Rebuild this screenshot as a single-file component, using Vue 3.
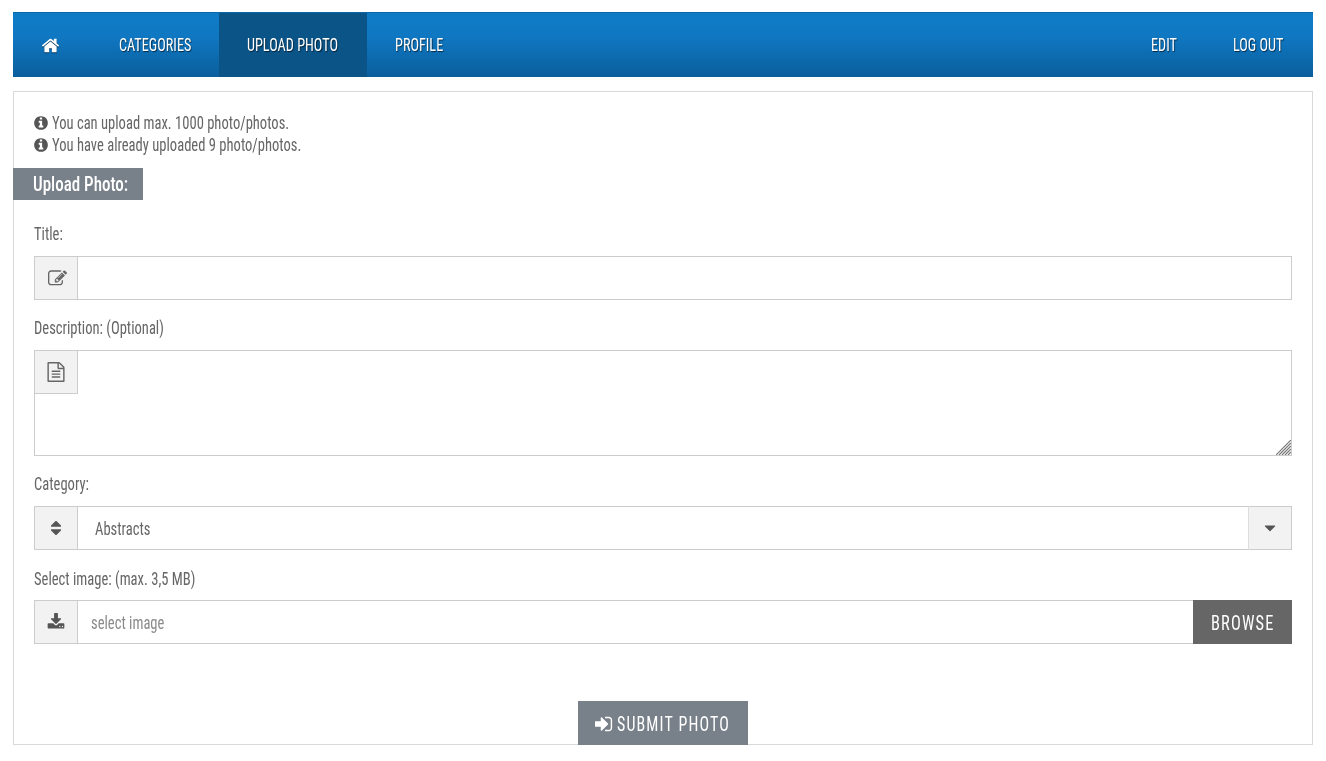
<script setup>
const notes = ['You can upload max. 1000 photo/photos.', 'You have already uploaded 9 photo/photos.']
const leftNav = [
  { label: 'CATEGORIES', width: 72, active: false },
  { label: 'UPLOAD PHOTO', width: 92, active: true },
  { label: 'PROFILE', width: 47, active: false },
]
const rightNav = [
  { label: 'EDIT', width: 26 },
  { label: 'LOG OUT', width: 52 },
]
const icons = {
  home: 'M1472 992v480q0 26-19 45t-45 19h-384v-384h-256v384h-384q-26 0-45-19t-19-45v-480q0-1 .5-3t.5-3l575-474 575 474q1 2 1 6zm223-69l-62 74q-8 9-21 11h-3q-13 0-21-7l-692-577-692 577q-12 8-24 7-13-2-21-11l-62-74q-8-10-7-23.500t11-21.500l719-599q32-26 76-26t76 26l244 204v-195q0-14 9-23t23-9h192q14 0 23 9t9 23v408l219 182q10 8 11 21.500t-7 23.500z',
  info: 'M1152 1376v-160q0-14-9-23t-23-9h-96v-512q0-14-9-23t-23-9h-320q-14 0-23 9t-9 23v160q0 14 9 23t23 9h96v320h-96q-14 0-23 9t-9 23v160q0 14 9 23t23 9h448q14 0 23-9t9-23zm-128-896v-160q0-14-9-23t-23-9h-192q-14 0-23 9t-9 23v160q0 14 9 23t23 9h192q14 0 23-9t9-23zm640 416q0 209-103 385.500t-279.500 279.500-385.500 103-385.500-103-279.500-279.500-103-385.500 103-385.500 279.500-279.500 385.500-103 385.500 103 279.500 279.500 103 385.500z',
  edit: 'M888 1184l116-116-152-152-116 116v56h96v96h56zm440-720q-16-16-33 1l-350 350q-17 17-1 33t33-1l350-350q17-17 1-33zm80 594v190q0 119-84.500 203.500t-203.500 84.500h-832q-119 0-203.500-84.500t-84.500-203.500v-832q0-119 84.500-203.500t203.500-84.500h832q63 0 117 25 15 7 18 23 3 17-9 29l-49 49q-14 14-32 8-23-6-45-6h-832q-66 0-113 47t-47 113v832q0 66 47 113t113 47h832q66 0 113-47t47-113v-126q0-13 9-22l64-64q15-15 35-7t20 29zm-96-738l288 288-672 672h-288v-288zm444 132l-92 92-288-288 92-92q28-28 68-28t68 28l152 152q28 28 28 68t-28 68z',
  file: 'M1596 380q28 28 48 76t20 88v1152q0 40-28 68t-68 28h-1344q-40 0-68-28t-28-68v-1600q0-40 28-68t68-28h896q40 0 88 20t76 48zm-444-244v376h376q-10-29-22-41l-313-313q-12-12-41-22zm384 1528v-1024h-416q-40 0-68-28t-28-68v-416h-768v1536h1280zm-1024-864q0-14 9-23t23-9h704q14 0 23 9t9 23v64q0 14-9 23t-23 9h-704q-14 0-23-9t-9-23v-64zm736 224q14 0 23 9t9 23v64q0 14-9 23t-23 9h-704q-14 0-23-9t-9-23v-64q0-14 9-23t23-9h704zm0 256q14 0 23 9t9 23v64q0 14-9 23t-23 9h-704q-14 0-23-9t-9-23v-64q0-14 9-23t23-9h704z',
  sort: 'M1408 1088q0 26-19 45l-448 448q-19 19-45 19t-45-19l-448-448q-19-19-19-45t19-45 45-19h896q26 0 45 19t19 45zm0-384q0 26-19 45t-45 19h-896q-26 0-45-19t-19-45 19-45l448-448q19-19 45-19t45 19l448 448q19 19 19 45z',
  caret: 'M1408 704q0 26-19 45l-448 448q-19 19-45 19t-45-19l-448-448q-19-19-19-45t19-45 45-19h896q26 0 45 19t19 45z',
  download: 'M1344 1344q0-26-19-45t-45-19-45 19-19 45 19 45 45 19 45-19 19-45zm256 0q0-26-19-45t-45-19-45 19-19 45 19 45 45 19 45-19 19-45zm128-224v320q0 40-28 68t-68 28h-1472q-40 0-68-28t-28-68v-320q0-40 28-68t68-28h465l135 136q58 56 136 56t136-56l136-136h464q40 0 68 28t28 68zm-325-569q17 41-14 70l-448 448q-18 19-45 19t-45-19l-448-448q-31-29-14-70 17-39 59-39h256v-448q0-26 19-45t45-19h256q26 0 45 19t19 45v448h256q42 0 59 39z',
  signin: 'M1184 896q0 26-19 45l-544 544q-19 19-45 19t-45-19-19-45v-288h-448q-26 0-45-19t-19-45v-384q0-26 19-45t45-19h448v-288q0-26 19-45t45-19 45 19l544 544q19 19 19 45zm352-352v704q0 119-84.500 203.500t-203.500 84.500h-320q-13 0-22.500-9.500t-9.500-22.500q0-4-1-20t-.5-26.500 3-23.500 10-19.500 20.500-6.500h320q66 0 113-47t47-113v-704q0-66-47-113t-113-47h-312l-11.500-1-11.500-3-8-5.500-7-9-2-13.500q0-4-1-20t-.5-26.500 3-23.500 10-19.500 20.500-6.500h320q119 0 203.500 84.500t84.500 203.500z',
}
</script>

<template>
  <div class="page">
    <nav class="nav">
      <a class="nav-home">
        <svg class="home-icon" viewBox="0 0 1792 1792"><path :d="icons.home" /></svg>
      </a>
      <a v-for="item in leftNav" :key="item.label" class="nav-item" :class="{ active: item.active }">
        <span class="nav-text" :style="{ width: item.width + 'px' }"><span class="squeeze">{{ item.label }}</span></span>
      </a>
      <span class="nav-spacer"></span>
      <a v-for="item in rightNav" :key="item.label" class="nav-item">
        <span class="nav-text" :style="{ width: item.width + 'px' }"><span class="squeeze">{{ item.label }}</span></span>
      </a>
    </nav>

    <main class="panel">
      <div class="notes">
        <p v-for="note in notes" :key="note" class="note">
          <svg class="note-icon" viewBox="0 0 1792 1792"><path :d="icons.info" /></svg>
          <span class="squeeze">{{ note }}</span>
        </p>
      </div>
      <h2 class="heading"><span class="squeeze">Upload Photo:</span></h2>

      <form class="form" @submit.prevent>
        <label class="label label-title"><span class="squeeze">Title:</span></label>
        <div class="group">
          <span class="addon"><svg class="icon icon-edit" viewBox="0 0 1792 1792"><path :d="icons.edit" /></svg></span>
          <input class="control" type="text" />
        </div>

        <label class="label label-desc"><span class="squeeze">Description: (Optional)</span></label>
        <div class="area-wrap">
          <span class="addon addon-float"><svg class="icon" viewBox="0 0 1792 1792"><path :d="icons.file" /></svg></span>
          <textarea class="area"></textarea>
          <svg class="grip" viewBox="0 0 15 15"><path d="M15 0 0 15M15 3 3 15M15 6 6 15M15 9 9 15M15 12 12 15" /></svg>
        </div>

        <label class="label label-cat"><span class="squeeze">Category:</span></label>
        <div class="group">
          <span class="addon"><svg class="icon icon-small" viewBox="0 0 1792 1792"><path :d="icons.sort" /></svg></span>
          <div class="control select-value"><span class="squeeze">Abstracts</span></div>
          <span class="addon addon-right"><svg class="icon icon-small" viewBox="0 0 1792 1792"><path :d="icons.caret" /></svg></span>
        </div>

        <label class="label label-img"><span class="squeeze">Select image: (max. 3,5 MB)</span></label>
        <div class="group">
          <span class="addon"><svg class="icon icon-small" viewBox="0 0 1792 1792"><path :d="icons.download" /></svg></span>
          <div class="control file-input"><span class="squeeze">select image</span></div>
          <button class="browse" type="button"><span class="squeeze-btn">BROWSE</span></button>
        </div>

        <div class="submit-row">
          <button class="submit" type="submit">
            <svg class="submit-icon" viewBox="0 0 1792 1792"><path :d="icons.signin" /></svg>
            <span class="submit-text"><span class="squeeze-submit">SUBMIT PHOTO</span></span>
          </button>
        </div>
      </form>
    </main>
  </div>
</template>

<style scoped>
.page {
  box-sizing: border-box;
  width: 1326px;
  height: 761px;
  padding: 12px 13px 0;
  background: #fff;
  font-family: "Roboto Condensed", Roboto, "Liberation Sans", sans-serif;
  color: #555;
  overflow: hidden;
}
.squeeze {
  display: inline-block;
  white-space: nowrap;
  transform: scaleX(0.81);
  transform-origin: left center;
}
.nav {
  display: flex;
  height: 65px;
  background: linear-gradient(to bottom, #0f7bc6 0%, #1078c3 35%, #0a5f9c 100%);
  border-top: 1px solid #0b68a8;
  box-sizing: border-box;
}
.nav-home {
  width: 78px;
  display: flex;
  align-items: center;
  padding-left: 28px;
  box-sizing: border-box;
}
.home-icon {
  width: 19px;
  height: 19px;
  fill: #fff;
  filter: drop-shadow(0 1px 0 rgba(0, 0, 0, 0.5));
}
.nav-item {
  display: flex;
  align-items: center;
  padding: 0 28px 1px;
  color: #fff;
  font-size: 18px;
  text-shadow: 1px 1px 1px rgba(0, 0, 0, 0.6);
}
.nav-text .squeeze {
  transform: scaleX(0.79);
}
.nav-text {
  display: block;
  white-space: nowrap;
}
.nav-item.active {
  background: #0a5488;
}
.nav-spacer {
  flex: 1;
}
.panel {
  margin-top: 14px;
  height: 654px;
  box-sizing: border-box;
  border: 1px solid #d9d9d9;
  display: flex;
  flex-direction: column;
}
.notes {
  padding: 19px 20px 0;
}
.note {
  margin: 0;
  display: flex;
  align-items: center;
  height: 22px;
  font-size: 18px;
  color: #666;
}
.note-icon {
  width: 16px;
  height: 16px;
  margin: 1px 3px 0 -1px;
  flex: none;
  fill: #555;
}
.heading {
  margin: 13px 0 0 -1px;
  width: 130px;
  height: 32px;
  box-sizing: border-box;
  padding-left: 20px;
  line-height: 32px;
  background: #788089;
  color: #fff;
  font-size: 21px;
  font-weight: 500;
}
.form {
  flex: 1;
  padding: 0 20px;
  display: flex;
  flex-direction: column;
}
.label {
  display: block;
  font-size: 18px;
  line-height: 22px;
  color: #666;
}
.label-title { margin-top: 23px; margin-bottom: 11px; }
.label-desc { margin-top: 17px; margin-bottom: 11px; }
.label-cat { margin-top: 17px; margin-bottom: 11px; }
.label-img { margin-top: 18px; margin-bottom: 10px; }
.group {
  display: flex;
  height: 44px;
  box-sizing: border-box;
}
.addon {
  width: 44px;
  height: 44px;
  flex: none;
  box-sizing: border-box;
  display: flex;
  align-items: center;
  justify-content: center;
  background: #f2f2f2;
  border: 1px solid #ccc;
}
.addon-right {
  border-left: 1px solid #ddd;
}
.addon-float {
  position: absolute;
  left: 0;
  top: 0;
}
.icon {
  width: 20px;
  height: 20px;
  fill: #666;
}
.icon-small {
  width: 18px;
  height: 18px;
  fill: #555;
}
.icon-edit {
  width: 19px;
  height: 19px;
  margin: 1px 0 0 2px;
}
.control {
  flex: 1;
  min-width: 0;
  box-sizing: border-box;
  height: 44px;
  margin: 0;
  border: 1px solid #ccc;
  border-left: 0;
  border-radius: 0;
  outline: 0;
  background: #fff;
  font-family: inherit;
  font-size: 18px;
  color: #666;
}
.select-value {
  border-right: 0;
  display: flex;
  align-items: center;
  padding-left: 17px;
}
.file-input {
  padding-left: 13px;
  border-right: 0;
  display: flex;
  align-items: center;
  color: #8a8a8a;
}
.area-wrap {
  position: relative;
  height: 106px;
}
.area {
  display: block;
  width: 100%;
  height: 106px;
  box-sizing: border-box;
  margin: 0;
  border: 1px solid #ccc;
  border-radius: 0;
  outline: 0;
  background: #fff;
  resize: none;
}
.grip {
  position: absolute;
  right: 1px;
  bottom: 1px;
  width: 15px;
  height: 15px;
  fill: none;
  stroke: #777;
  stroke-width: 1.2;
}
.browse {
  width: 99px;
  height: 44px;
  border: 0;
  padding: 1px 0 0;
  background: #666;
  color: #fff;
  font-family: inherit;
  font-size: 21px;
  letter-spacing: 1.5px;
  display: flex;
  align-items: center;
  justify-content: center;
}
.squeeze-btn {
  flex: none;
  white-space: nowrap;
  transform: scaleX(0.78);
}
.submit-row {
  margin-top: auto;
  margin-bottom: -1px;
  display: flex;
  justify-content: center;
}
.submit {
  width: 170px;
  height: 44px;
  border: 0;
  padding: 1px 0 0 17px;
  background: #788089;
  color: #fff;
  font-family: inherit;
  font-size: 21px;
  letter-spacing: 1.5px;
  display: flex;
  align-items: center;
  justify-content: flex-start;
}
.submit-icon {
  width: 20px;
  height: 20px;
  margin-right: 2px;
  flex: none;
  fill: #fff;
}
.submit-text {
  display: block;
  width: 113px;
  white-space: nowrap;
}
.squeeze-submit {
  display: inline-block;
  transform: scaleX(0.76);
  transform-origin: left center;
}
</style>

<style>
html, body { background: #fff; }
</style>
